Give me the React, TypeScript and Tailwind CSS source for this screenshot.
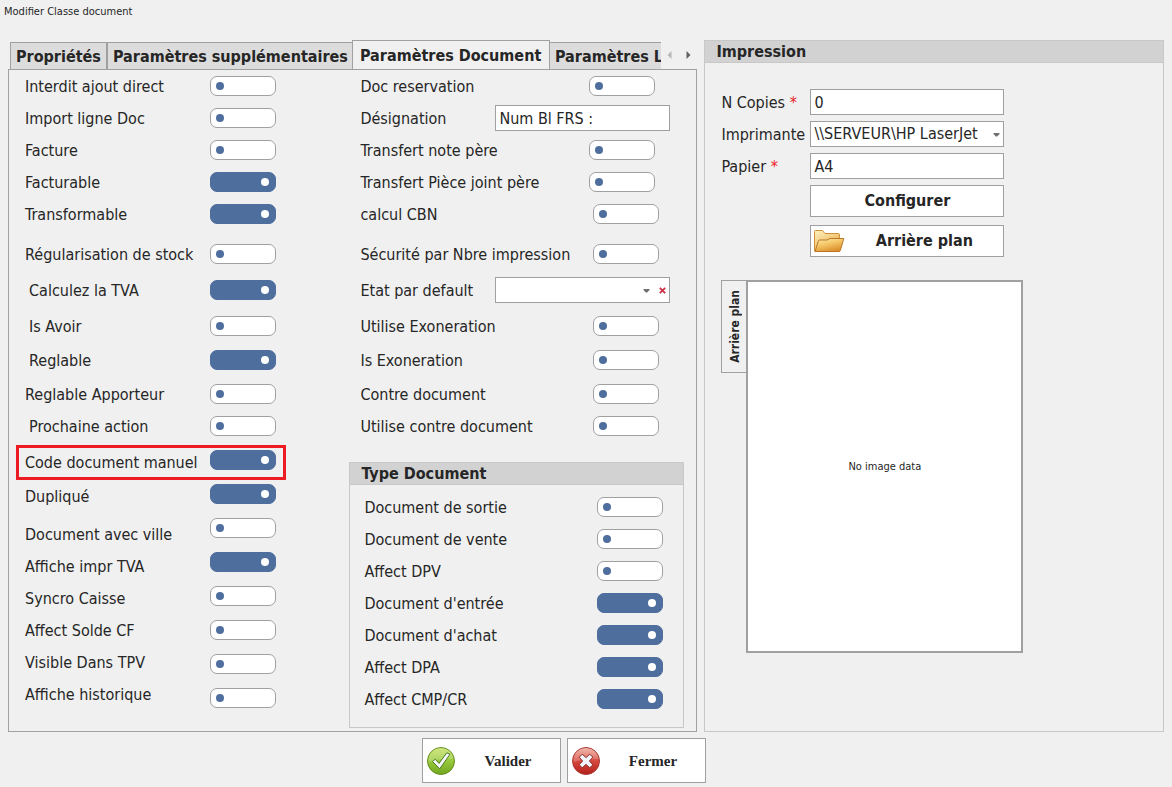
import React from 'react';
import clsx from 'clsx';

interface Field {
  id: string;
  label: string;
  on?: boolean;
  className?: string;
}

interface Spacing {
  labelGap: string;
  toggleGap: string;
}

const generalFields: (Field & Spacing)[] = [
  { id: 'ajout', label: 'Interdit ajout direct', labelGap: 'mb-1.5', toggleGap: 'mb-1.5' },
  { id: 'import', label: 'Import ligne Doc', labelGap: 'mb-1.5', toggleGap: 'mb-1.5' },
  { id: 'facture', label: 'Facture', labelGap: 'mb-1.5', toggleGap: 'mb-1.5' },
  { id: 'facturable', label: 'Facturable', on: true, labelGap: 'mb-1.5', toggleGap: 'mb-1.5' },
  { id: 'transformable', label: 'Transformable', on: true, labelGap: 'mb-3.5', toggleGap: 'mb-3.5' },
  { id: 'stock', label: 'Régularisation de stock', labelGap: 'mb-2.5', toggleGap: 'mb-2.5' },
  { id: 'tva', label: 'Calculez la TVA', on: true, className: 'pl-1', labelGap: 'mb-2.5', toggleGap: 'mb-2.5' },
  { id: 'avoir', label: 'Is Avoir', className: 'pl-1', labelGap: 'mb-2', toggleGap: 'mb-2' },
  { id: 'reglable', label: 'Reglable', on: true, className: 'pl-1', labelGap: 'mb-2', toggleGap: 'mb-2' },
  { id: 'apporteur', label: 'Reglable Apporteur', labelGap: 'mb-1.5', toggleGap: 'mb-1.5' },
  { id: 'action', label: 'Prochaine action', className: 'pl-1', labelGap: 'mb-2.5', toggleGap: 'mb-2' },
  { id: 'code', label: 'Code document manuel', on: true, labelGap: 'mb-2', toggleGap: 'mb-2' },
  { id: 'duplique', label: 'Dupliqué', on: true, labelGap: 'mb-3', toggleGap: 'mb-2' },
  { id: 'ville', label: 'Document avec ville', labelGap: 'mb-1.5', toggleGap: 'mb-2' },
  { id: 'impr-tva', label: 'Affiche impr TVA', on: true, labelGap: 'mb-1.5', toggleGap: 'mb-2' },
  { id: 'caisse', label: 'Syncro Caisse', labelGap: 'mb-1.5', toggleGap: 'mb-2' },
  { id: 'solde', label: 'Affect Solde CF', labelGap: 'mb-1.5', toggleGap: 'mb-2' },
  { id: 'tpv', label: 'Visible Dans TPV', labelGap: 'mb-1.5', toggleGap: 'mb-2' },
  { id: 'historique', label: 'Affiche historique', labelGap: '', toggleGap: '' },
];

const typeFields: Field[] = [
  { id: 'sortie', label: 'Document de sortie' },
  { id: 'vente', label: 'Document de vente' },
  { id: 'dpv', label: 'Affect DPV' },
  { id: 'entree', label: "Document d'entrée", on: true },
  { id: 'achat', label: "Document d'achat", on: true },
  { id: 'dpa', label: 'Affect DPA', on: true },
  { id: 'cmp', label: 'Affect CMP/CR', on: true },
];

const inputClass = 'h-[26px] w-full border border-[#a0a0a0] bg-white px-[3px] text-base leading-6 outline-none';

function Toggle({ id, on }: { id: string; on?: boolean }) {
  return (
    <input
      id={id}
      type="checkbox"
      role="switch"
      defaultChecked={on}
      className="flex h-5 w-[66px] shrink-0 appearance-none items-center rounded-[7px] border border-[#a0a0a0] bg-white px-[5px] before:size-2 before:rounded-full before:bg-[#4e6e9e] checked:justify-end checked:border-[#4e6e9e] checked:bg-[#4e6e9e] checked:px-1.5 checked:before:bg-white"
    />
  );
}

function Row({ id, label, gap, children }: { id: string; label: string; gap?: string; children: React.ReactNode }) {
  return (
    <div className={clsx('flex h-[26px] items-center justify-between', gap)}>
      <label htmlFor={id} className="pt-0.5 whitespace-nowrap">{label}</label>
      {children}
    </div>
  );
}

function Caret() {
  return (
    <svg viewBox="0 0 7 4" className="h-1 w-[7px]" fill="#707070">
      <path d="M0.5 0h6v1L4.2 3.4H2.8L0.5 1z" />
    </svg>
  );
}

function FolderIcon() {
  return (
    <svg viewBox="0 0 32 24" className="h-6 w-8 shrink-0">
      <defs>
        <linearGradient id="folderBack" x1="0" y1="0" x2="0.6" y2="1">
          <stop offset="0" stopColor="#fff3c0" />
          <stop offset="1" stopColor="#e8ac4c" />
        </linearGradient>
        <linearGradient id="folderFront" x1="0" y1="0" x2="0.5" y2="1">
          <stop offset="0" stopColor="#ffedb0" />
          <stop offset="0.5" stopColor="#f5c667" />
          <stop offset="1" stopColor="#dd922f" />
        </linearGradient>
      </defs>
      <path d="M1.5 22V2.5Q1.5 1.5 2.5 1.5H9.5L12 4.5H25Q26.5 4.5 26.5 6V22Z" fill="url(#folderBack)" stroke="#cf9238" />
      <path d="M2 22.5 5.5 11.7Q5.8 11 6.5 11H14L17 9.5H30.8L27.3 21.5Q27 22.5 26 22.5Z" fill="url(#folderFront)" stroke="#b97625" />
    </svg>
  );
}

function CheckIcon() {
  return (
    <svg viewBox="0 0 30 30" className="size-[30px] shrink-0">
      <defs>
        <linearGradient id="greenBall" x1="0" y1="0" x2="0" y2="1">
          <stop offset="0" stopColor="#c5e060" />
          <stop offset="0.5" stopColor="#98c93c" />
          <stop offset="1" stopColor="#6fa51f" />
        </linearGradient>
      </defs>
      <circle cx="15" cy="15" r="13.5" fill="url(#greenBall)" stroke="#66901e" />
      <path d="M2.5 16A12.5 12.5 0 0 1 27.5 13Q15 12 2.5 16Z" fill="#fff" opacity="0.2" />
      <path d="M6.5 15.5 9.3 13.2 13 17.4 20.8 6.8 24 8.2 13.7 22.8Z" fill="#f4f7fb" stroke="#4f7a20" strokeLinejoin="round" />
    </svg>
  );
}

function CloseIcon() {
  return (
    <svg viewBox="0 0 30 30" className="size-[30px] shrink-0">
      <defs>
        <linearGradient id="redBall" x1="0" y1="0" x2="0" y2="1">
          <stop offset="0" stopColor="#efaa9c" />
          <stop offset="0.5" stopColor="#d6493d" />
          <stop offset="1" stopColor="#b31f1c" />
        </linearGradient>
      </defs>
      <circle cx="15" cy="15" r="13.5" fill="url(#redBall)" stroke="#a83a34" />
      <path d="M2.5 16A12.5 12.5 0 0 1 27.5 13Q15 12 2.5 16Z" fill="#fff" opacity="0.18" />
      <path d="M11.2 8.2 15 11.6 18.8 8.2 21.8 11.2 18.4 15 21.8 18.8 18.8 21.8 15 18.4 11.2 21.8 8.2 18.8 11.6 15 8.2 11.2Z" fill="#f1f4f9" stroke="#8d2a28" strokeLinejoin="round" />
    </svg>
  );
}

function TabStrip() {
  const tab = 'h-[27px] shrink-0 border border-b-0 border-[#a0a0a0] bg-[#dcdcdc] pt-0.5 text-left';
  return (
    <div className="flex h-[29px] items-end pl-0.5">
      <div role="tablist" className="flex h-[30px] min-w-0 flex-1 items-end overflow-hidden text-base leading-5 font-bold whitespace-nowrap">
        <button role="tab" className={clsx(tab, 'w-[97px] pl-[5px]')}>Propriétés</button>
        <button role="tab" className={clsx(tab, 'w-[245px] border-r-0 pl-[5px]')}>Paramètres supplémentaires</button>
        <button role="tab" aria-selected className="z-10 -mb-px h-[30px] w-[198px] shrink-0 border border-b-0 border-[#a0a0a0] bg-[#f0f0f0] pl-[7px] text-left">
          Paramètres Document
        </button>
        <button role="tab" className={clsx(tab, 'w-[150px] border-l-0 pl-[5px]')}>Paramètres Ligne</button>
      </div>
      <div className="flex h-7 w-9 items-center justify-between pr-1.5 pl-1.5">
        <button aria-label="Onglet précédent">
          <svg viewBox="0 0 5 8" className="h-2 w-[5px]" fill="#b8b8b8"><path d="M4.5 0v8L0.5 4z" /></svg>
        </button>
        <button aria-label="Onglet suivant">
          <svg viewBox="0 0 5 8" className="h-2 w-[5px]" fill="#606060"><path d="M0.5 0v8L4.5 4z" /></svg>
        </button>
      </div>
    </div>
  );
}

function GeneralColumn() {
  return (
    <div className="flex w-[251px] shrink-0 justify-between">
      <div>
        {generalFields.map((f) => (
          <div key={f.id} className={clsx('relative flex h-[26px] items-center', f.labelGap, f.className)}>
            <label htmlFor={f.id} className="pt-0.5 whitespace-nowrap">{f.label}</label>
            {f.id === 'code' && (
              <span className="pointer-events-none absolute -top-1 -left-[9px] h-[35px] w-[270px] border-3 border-[#ed1c24]" />
            )}
          </div>
        ))}
      </div>
      <div>
        {generalFields.map((f) => (
          <div key={f.id} className={clsx('flex h-[26px] items-center', f.toggleGap)}>
            <Toggle id={f.id} on={f.on} />
          </div>
        ))}
      </div>
    </div>
  );
}

function DocumentColumn() {
  return (
    <div className="w-[335px] shrink-0">
      <div className="pr-[25px] pl-[11px]">
        <div className="pr-1">
          <Row id="reservation" label="Doc reservation" gap="mb-1.5"><Toggle id="reservation" /></Row>
        </div>
        <div className="-mr-[11px]">
          <Row id="designation" label="Désignation" gap="mb-1.5">
            <div className="w-[175px]">
              <input id="designation" type="text" defaultValue="Num Bl FRS :" className={inputClass} />
            </div>
          </Row>
        </div>
        <div className="pr-1">
          <Row id="note" label="Transfert note père" gap="mb-1.5"><Toggle id="note" /></Row>
          <Row id="piece" label="Transfert Pièce joint père" gap="mb-1.5"><Toggle id="piece" /></Row>
        </div>
        <Row id="cbn" label="calcul CBN" gap="mb-3.5"><Toggle id="cbn" /></Row>
        <Row id="securite" label="Sécurité par Nbre impression" gap="mb-2.5"><Toggle id="securite" /></Row>
        <div className="-mr-[11px]">
          <Row id="etat" label="Etat par default" gap="mb-2.5">
            <div className="relative w-[175px]">
              <select id="etat" className={clsx(inputClass, 'appearance-none')}>
                <option value=""></option>
              </select>
              <span className="pointer-events-none absolute top-3 right-5 flex"><Caret /></span>
              <button aria-label="Effacer" className="absolute top-[10px] right-1 flex">
                <svg viewBox="0 0 7 7" className="size-[7px]" stroke="#cc2f45" strokeWidth="1.8"><path d="M0.8 0.8 6.2 6.2M6.2 0.8 0.8 6.2" /></svg>
              </button>
            </div>
          </Row>
        </div>
        <Row id="u-exo" label="Utilise Exoneration" gap="mb-2"><Toggle id="u-exo" /></Row>
        <Row id="is-exo" label="Is Exoneration" gap="mb-2"><Toggle id="is-exo" /></Row>
        <Row id="contre" label="Contre document" gap="mb-1.5"><Toggle id="contre" /></Row>
        <Row id="u-contre" label="Utilise contre document"><Toggle id="u-contre" /></Row>
      </div>

      <section className="mt-[23px] border border-[#c8c8c8]">
        <h2 className="h-[22px] border-b border-[#c8c8c8] bg-[#d2d2d2] pl-[11px] text-base leading-[22px] font-bold">Type Document</h2>
        <div className="flex flex-col gap-1.5 pt-[9px] pr-5 pb-[15px] pl-3.5">
          {typeFields.map((f) => (
            <Row key={f.id} id={f.id} label={f.label}><Toggle id={f.id} on={f.on} /></Row>
          ))}
        </div>
      </section>
    </div>
  );
}

function PrintPanel() {
  const button = 'col-start-2 flex h-8 items-center border border-[#a0a0a0] bg-white text-base font-bold';
  return (
    <section className="min-w-0 border border-[#c8c8c8]">
      <h2 className="h-[22px] border-b border-[#c8c8c8] bg-[#d2d2d2] pl-[11px] text-base leading-[22px] font-bold">Impression</h2>
      <div className="grid grid-cols-[89px_194px] items-center gap-y-1.5 pt-[26px] pl-4">
        <label htmlFor="copies" className="pt-0.5">N Copies <span className="text-[#ed1c24]">*</span></label>
        <input id="copies" type="text" defaultValue="0" className={inputClass} />
        <label htmlFor="imprimante" className="pt-0.5">Imprimante</label>
        <div className="relative">
          <select id="imprimante" className={clsx(inputClass, 'appearance-none pr-5')}>
            <option>{'\\\\SERVEUR\\HP LaserJet'}</option>
          </select>
          <span className="pointer-events-none absolute top-3 right-1 flex"><Caret /></span>
        </div>
        <label htmlFor="papier" className="pt-0.5">Papier <span className="text-[#ed1c24]">*</span></label>
        <input id="papier" type="text" defaultValue="A4" className={inputClass} />
        <button className={clsx(button, 'justify-center')}>Configurer</button>
        <button className={clsx(button, 'mt-0.5 pl-0.5')}>
          <FolderIcon />
          <span className="flex-1 text-center">Arrière plan</span>
        </button>
      </div>

      {/* Background preview with its side tab */}
      <div className="mt-[23px] flex items-start pl-4">
        <button role="tab" className="-mr-px flex h-[93px] w-[26px] items-center justify-center border border-r-0 border-[#a0a0a0] text-xs font-bold">
          <span className="rotate-180 whitespace-nowrap [writing-mode:vertical-rl]">Arrière plan</span>
        </button>
        <div className="flex h-[373px] w-[277px] items-center justify-center border-2 border-[#a0a0a0] bg-white text-[11px]">
          No image data
        </div>
      </div>
    </section>
  );
}

export default function App() {
  const action = 'flex h-[45px] w-[139px] items-center border border-[#a0a0a0] bg-white pl-[3px] font-["Liberation_Serif",serif] text-[15px] font-bold';
  return (
    <div className="min-h-screen bg-[#f0f0f0] pb-1 font-['DejaVu_Sans_Condensed','Noto_Sans',sans-serif] text-base leading-5 text-[#262626]">
      <h1 className="mb-4 h-6 pl-1 text-[11px] leading-6">Modifier Classe document</h1>

      <main className="grid grid-cols-[3fr_2fr] gap-[7px] px-2">
        <div className="flex min-w-0 flex-col">
          <TabStrip />
          <div className="flex flex-1 justify-between border border-[#a0a0a0] pt-[3px] pr-3 pb-[3px] pl-4">
            <GeneralColumn />
            <DocumentColumn />
          </div>
        </div>
        <PrintPanel />
      </main>

      <footer className="mt-1.5 flex justify-center gap-1.5 pr-11">
        <button className={action}>
          <CheckIcon />
          <span className="flex-1 text-center">Valider</span>
        </button>
        <button className={action}>
          <CloseIcon />
          <span className="flex-1 text-center">Fermer</span>
        </button>
      </footer>
    </div>
  );
}
